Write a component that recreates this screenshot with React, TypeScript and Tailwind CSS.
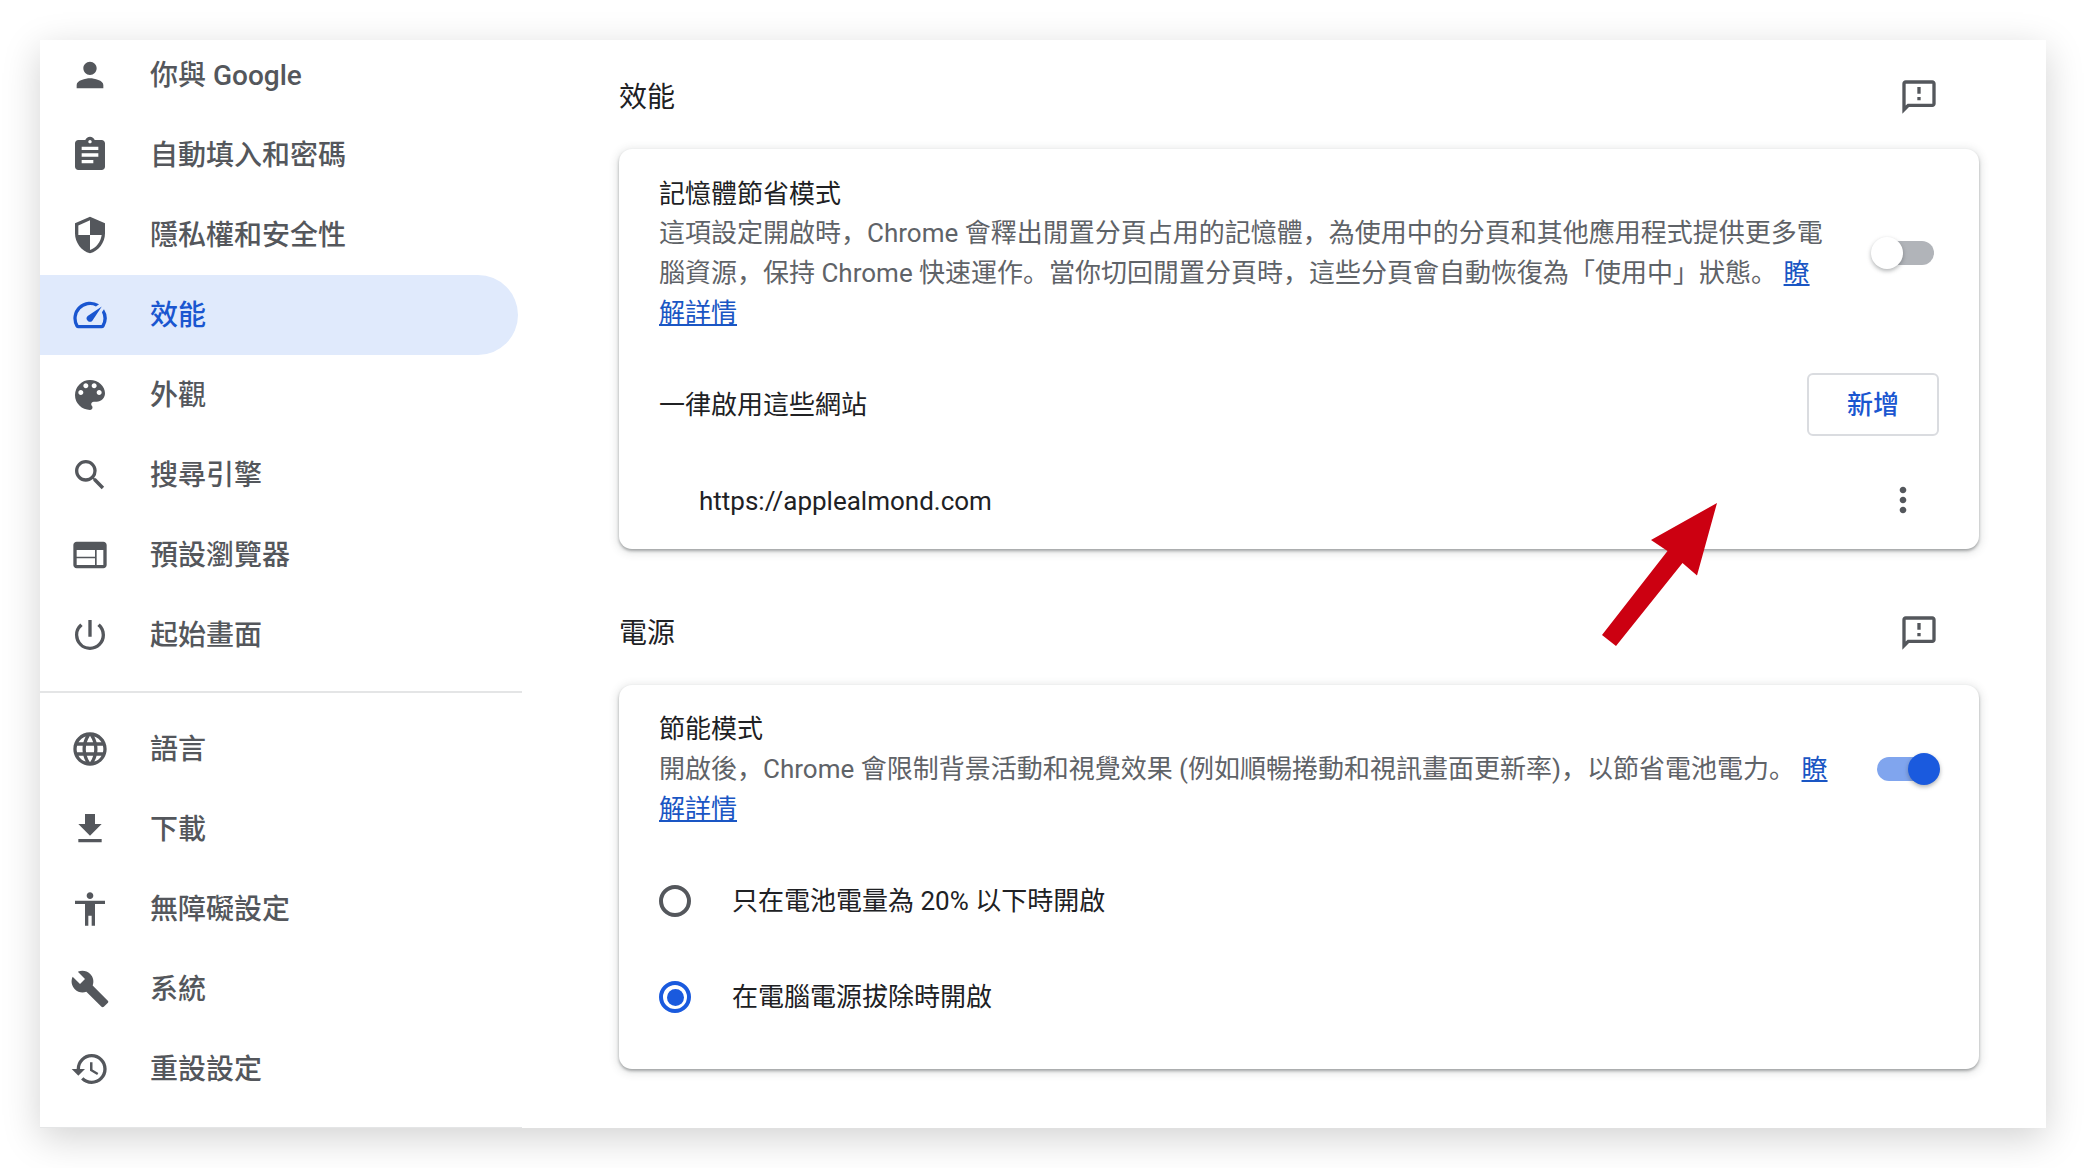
const ICONS: Record<string, string> = {
  person: "M12 12c2.21 0 4-1.79 4-4s-1.79-4-4-4-4 1.79-4 4 1.79 4 4 4zm0 2c-2.67 0-8 1.34-8 4v2h16v-2c0-2.66-5.33-4-8-4z",
  assignment: "M19 3h-4.18C14.4 1.84 13.3 1 12 1c-1.3 0-2.4.84-2.82 2H5c-1.1 0-2 .9-2 2v14c0 1.1.9 2 2 2h14c1.1 0 2-.9 2-2V5c0-1.1-.9-2-2-2zm-7 0c.55 0 1 .45 1 1s-.45 1-1 1-1-.45-1-1 .45-1 1-1zm2 14H7v-2h7v2zm3-4H7v-2h10v2zm0-4H7V7h10v2z",
  shield: "M12 1L3 5v6c0 5.55 3.84 10.74 9 12 5.16-1.26 9-6.45 9-12V5l-9-4zm0 10.99h7c-.53 4.12-3.28 7.79-7 8.94V12H5V6.3l7-3.11v8.8z",
  speed: "M20.38 8.57l-1.23 1.85a8 8 0 0 1-.22 7.58H5.07A8 8 0 0 1 15.58 6.85l1.85-1.23A10 10 0 0 0 3.35 19a2 2 0 0 0 1.72 1h13.85a2 2 0 0 0 1.74-1 10 10 0 0 0-.27-10.44zm-9.79 6.84a2 2 0 0 0 2.83 0l5.66-8.49-8.49 5.66a2 2 0 0 0 0 2.83z",
  palette: "M12 3a9 9 0 0 0 0 18c.83 0 1.5-.67 1.5-1.5 0-.39-.15-.74-.39-1.01-.23-.26-.38-.61-.38-.99 0-.83.67-1.5 1.5-1.5H16c2.76 0 5-2.24 5-5 0-4.42-4.03-8-9-8zm-5.5 9c-.83 0-1.5-.67-1.5-1.5S5.67 9 6.5 9 8 9.67 8 10.5 7.33 12 6.5 12zm3-4C8.67 8 8 7.33 8 6.5S8.67 5 9.5 5s1.5.67 1.5 1.5S10.33 8 9.5 8zm5 0c-.83 0-1.5-.67-1.5-1.5S13.67 5 14.5 5s1.5.67 1.5 1.5S15.33 8 14.5 8zm3 4c-.83 0-1.5-.67-1.5-1.5S16.67 9 17.5 9s1.5.67 1.5 1.5-.67 1.5-1.5 1.5z",
  search: "M15.5 14h-.79l-.28-.27A6.471 6.471 0 0 0 16 9.5 6.5 6.5 0 1 0 9.5 16c1.61 0 3.09-.59 4.23-1.57l.27.28v.79l5 4.99L20.49 19l-4.99-5zm-6 0C7.01 14 5 11.99 5 9.5S7.01 5 9.5 5 14 7.01 14 9.5 11.99 14 9.5 14z",
  web: "M20 4H4c-1.1 0-1.99.9-1.99 2L2 18c0 1.1.9 2 2 2h16c1.1 0 2-.9 2-2V6c0-1.1-.9-2-2-2zm-5 14H4v-4h11v4zm0-5H4V9h11v4zm5 5h-4V9h4v9z",
  power: "M13 3h-2v10h2V3zm4.83 2.17l-1.42 1.42A6.92 6.92 0 0 1 19 12c0 3.87-3.13 7-7 7A6.995 6.995 0 0 1 7.58 6.58L6.17 5.17A8.932 8.932 0 0 0 3 12a9 9 0 0 0 18 0c0-2.74-1.23-5.18-3.17-6.83z",
  language: "M11.99 2C6.47 2 2 6.48 2 12s4.47 10 9.99 10C17.52 22 22 17.52 22 12S17.52 2 11.99 2zm6.93 6h-2.95a15.65 15.65 0 0 0-1.38-3.56A8.03 8.03 0 0 1 18.92 8zM12 4.04c.83 1.2 1.48 2.53 1.91 3.96h-3.82c.43-1.43 1.08-2.76 1.91-3.96zM4.26 14C4.1 13.36 4 12.69 4 12s.1-1.36.26-2h3.38c-.08.66-.14 1.32-.14 2 0 .68.06 1.34.14 2H4.26zm.82 2h2.95c.32 1.25.78 2.45 1.38 3.56A7.987 7.987 0 0 1 5.08 16zm2.95-8H5.08a7.987 7.987 0 0 1 4.33-3.56A15.65 15.65 0 0 0 8.03 8zM12 19.96c-.83-1.2-1.48-2.53-1.91-3.96h3.82c-.43 1.43-1.08 2.76-1.91 3.96zM14.34 14H9.66c-.09-.66-.16-1.32-.16-2 0-.68.07-1.35.16-2h4.68c.09.65.16 1.32.16 2 0 .68-.07 1.34-.16 2zm.25 5.56c.6-1.11 1.06-2.31 1.38-3.56h2.95a8.03 8.03 0 0 1-4.33 3.56zM16.36 14c.08-.66.14-1.32.14-2 0-.68-.06-1.34-.14-2h3.38c.16.64.26 1.31.26 2s-.1 1.36-.26 2h-3.38z",
  download: "M19 9h-4V3H9v6H5l7 7 7-7zM5 18v2h14v-2H5z",
  accessibility: "M12 2c1.1 0 2 .9 2 2s-.9 2-2 2-2-.9-2-2 .9-2 2-2zm9 7h-6v13h-2v-6h-2v6H9V9H3V7h18v2z",
  build: "M22.7 19l-9.1-9.1c.9-2.3.4-5-1.5-6.9-2-2-5-2.4-7.4-1.3L9 6 6 9 1.6 4.7C.4 7.1.9 10.1 2.9 12.1c1.9 1.9 4.6 2.4 6.9 1.5l9.1 9.1c.4.4 1 .4 1.4 0l2.3-2.3c.5-.4.5-1.1.1-1.4z",
  restore: "M13 3a9 9 0 0 0-9 9H1l3.89 3.89.07.14L9 12H6c0-3.87 3.13-7 7-7s7 3.13 7 7-3.13 7-7 7c-1.93 0-3.68-.79-4.94-2.06l-1.42 1.42A8.954 8.954 0 0 0 13 21a9 9 0 0 0 0-18zm-1 5v5l4.28 2.54.72-1.21-3.5-2.08V8H12z",
  feedback: "M20 2H4c-1.1 0-2 .9-2 2v18l4-4h14c1.1 0 2-.9 2-2V4c0-1.1-.9-2-2-2zm0 14H5.17L4 17.17V4h16v12zM11 12h2v2h-2zm0-6h2v4h-2z",
  more: "M12 8c1.1 0 2-.9 2-2s-.9-2-2-2-2 .9-2 2 .9 2 2 2zm0 2c-1.1 0-2 .9-2 2s.9 2 2 2 2-.9 2-2-.9-2-2-2zm0 6c-1.1 0-2 .9-2 2s.9 2 2 2 2-.9 2-2-.9-2-2-2z",
};

const Icon = ({ name, className }: { name: string; className?: string }) => (
  <svg viewBox="0 0 24 24" fill="currentColor" className={`w-[40px] h-[40px] shrink-0 ${className ?? ""}`}>
    <path d={ICONS[name]} />
  </svg>
);

const NavItem = ({ icon, label, active }: { icon: string; label: string; active?: boolean }) => (
  <div
    className={`flex items-center h-[80px] w-[478px] pl-[30px] gap-[40px] rounded-r-[40px] text-[28px] font-medium ${
      active ? "bg-[#e0eafc] text-[#1a56d0]" : "text-[#54575c]"
    }`}
  >
    <Icon name={icon} />
    <span className="pt-[2px]">{label}</span>
  </div>
);

const SectionHeader = ({ title }: { title: string }) => (
  <div className="flex items-center justify-between h-[109px] pt-[4px] pr-[40px]">
    <h2 className="text-[28px] font-normal text-[#202124] pt-[2px]">{title}</h2>
    <Icon name="feedback" className="text-[#54575c]" />
  </div>
);

const Toggle = ({ on }: { on?: boolean }) => (
  <div className={`relative w-[60px] h-[24px] rounded-full shrink-0 ${on ? "bg-[#80a5ee] ml-[46px]" : "bg-[#b1b4b9] ml-[43px]"}`}>
    <div
      className={`absolute top-[-4px] w-[32px] h-[32px] rounded-full shadow-[0_2px_4px_rgba(60,64,67,0.4)] ${
        on ? "right-[-3px] bg-[#1a5ade]" : "left-[-3px] bg-white"
      }`}
    />
  </div>
);

const Radio = ({ checked, label }: { checked?: boolean; label: string }) => (
  <div className="flex items-center h-[96px] gap-[41px]">
    <div
      className={`flex items-center justify-center w-[32px] h-[32px] rounded-full border-[4px] ${
        checked ? "border-[#1a5ade]" : "border-[#54575c]"
      }`}
    >
      {checked && <div className="w-[17px] h-[17px] rounded-full bg-[#1a5ade]" />}
    </div>
    <span className="text-[#202124]">{label}</span>
  </div>
);

const LINK = "text-[#1a56c4] underline underline-offset-2";

const CARD =
  "bg-white rounded-[13px] shadow-[0_2px_3px_rgba(60,64,67,0.4),0_2px_8px_2px_rgba(60,64,67,0.15)] text-[26px] leading-[40px]";

export default function App() {
  return (
    <div className="w-[2086px] h-[1168px] bg-white pt-[40px] pl-[40px] overflow-hidden font-[Roboto,'Noto_Sans_CJK_SC',sans-serif]">
      <div className="relative flex w-[2006px] h-[1088px] bg-white overflow-hidden shadow-[0_10px_36px_rgba(0,0,0,0.18)]">
        <aside className="w-[482px] shrink-0 -mt-[5px]">
          <NavItem icon="person" label="你與 Google" />
          <NavItem icon="assignment" label="自動填入和密碼" />
          <NavItem icon="shield" label="隱私權和安全性" />
          <NavItem icon="speed" label="效能" active />
          <NavItem icon="palette" label="外觀" />
          <NavItem icon="search" label="搜尋引擎" />
          <NavItem icon="web" label="預設瀏覽器" />
          <NavItem icon="power" label="起始畫面" />
          <div className="h-[2px] bg-[#e4e5e6] mt-[16px] mb-[16px]" />
          <NavItem icon="language" label="語言" />
          <NavItem icon="download" label="下載" />
          <NavItem icon="accessibility" label="無障礙設定" />
          <NavItem icon="build" label="系統" />
          <NavItem icon="restore" label="重設設定" />
          <div className="h-[2px] bg-[#e4e5e6] mt-[18px]" />
        </aside>

        <main className="flex-1 pl-[97px] pr-[67px]">
          <SectionHeader title="效能" />
          <section className={`${CARD} h-[400px] pt-[24px]`}>
            <div className="flex items-center pl-[40px]">
              <div className="w-[1172px]">
                <div className="text-[#202124] h-[40px] pt-[1px]">記憶體節省模式</div>
                <div className="text-[#5f6368]">
                  這項設定開啟時，Chrome 會釋出閒置分頁占用的記憶體，為使用中的分頁和其他應用程式提供更多電腦資源，保持 Chrome 快速運作。當你切回閒置分頁時，這些分頁會自動恢復為「使用中」狀態。 <a className={LINK}>瞭</a>
                  <br />
                  <a className={LINK}>解詳情</a>
                </div>
              </div>
              <Toggle />
            </div>
            <div className="flex items-center justify-between h-[63px] mt-[40px] pl-[40px] pr-[40px]">
              <span className="text-[#202124] pt-[1px]">一律啟用這些網站</span>
              <button className="w-[132px] h-[63px] rounded-[6px] border-2 border-[#dadce0] bg-white text-[#1a56d0] font-medium">
                新增
              </button>
            </div>
            <div className="flex items-center justify-between h-[80px] mt-[24px] pl-[80px] pr-[56px]">
              <span className="text-[#202124] pt-[2px]">https://applealmond.com</span>
              <Icon name="more" className="text-[#54575c]" />
            </div>
          </section>

          <div className="mt-[27px]">
            <SectionHeader title="電源" />
          </div>
          <section className={`${CARD} h-[384px] pt-[24px] pl-[40px]`}>
            <div className="flex items-center">
              <div className="w-[1172px]">
                <div className="text-[#202124]">節能模式</div>
                <div className="text-[#5f6368]">
                  開啟後，Chrome 會限制背景活動和視覺效果 (例如順暢捲動和視訊畫面更新率)，以節省電池電力。 <a className={LINK}>瞭</a>
                  <br />
                  <a className={LINK}>解詳情</a>
                </div>
              </div>
              <Toggle on />
            </div>
            <div className="mt-[24px]">
              <Radio label="只在電池電量為 20% 以下時開啟" />
              <Radio checked label="在電腦電源拔除時開啟" />
            </div>
          </section>
        </main>

        {/* red annotation arrow on top of the screenshot */}
        <svg className="absolute left-[1551px] top-[455px] w-[130px] h-[160px]" viewBox="0 0 130 160">
          <polygon points="126,8 60,45 76.5,56 11,140 25,151 91.5,68 106,80.5" fill="#cc0011" />
        </svg>
      </div>
    </div>
  );
}
